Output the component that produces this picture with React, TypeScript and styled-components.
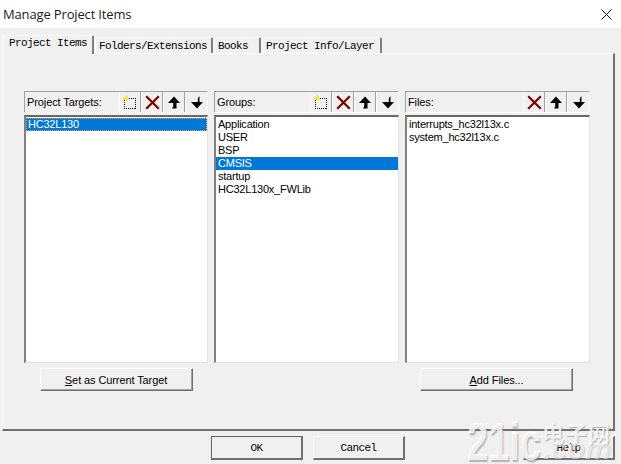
import React from "react";
import styled, { createGlobalStyle } from "styled-components";

const Global = createGlobalStyle`
  html, body { margin: 0; padding: 0; background: #f0f0f0; }
  * { box-sizing: border-box; }
`;

const Win = styled.div`
  position: relative;
  width: 621px;
  height: 464px;
  overflow: hidden;
  display: flex;
  flex-direction: column;
  background: #f0f0f0;
  font-family: "Liberation Sans", Arial, sans-serif;
`;

const TitleBar = styled.div`
  height: 28px;
  flex: none;
  background: #fff;
  display: flex;
  align-items: center;
  justify-content: space-between;
  padding: 0 9px 0 3px;
`;

const Title = styled.div`
  font: 13px "Open Sans", "Noto Sans", sans-serif;
  color: #1a1a1a;
  letter-spacing: -0.15px;
`;

const TabRow = styled.div`
  height: 25px;
  flex: none;
  padding: 7px 0 0 2px;
  display: flex;
  align-items: flex-end;
  gap: 1px;
`;

const Tab = styled.div<{ $active?: boolean; $w: number }>`
  position: relative;
  width: ${(p) => p.$w}px;
  height: ${(p) => (p.$active ? 19 : 16)}px;
  margin-bottom: ${(p) => (p.$active ? -1 : 0)}px;
  z-index: ${(p) => (p.$active ? 2 : 0)};
  background: #f0f0f0;
  border-top: 1px solid #fff;
  border-left: 1px solid #fff;
  border-right: 2px solid #808080;
  border-radius: 2px 2px 0 0;
  font: 11px/15px "Liberation Mono", monospace;
  letter-spacing: -0.6px;
  color: #000;
  white-space: nowrap;
  padding-left: ${(p) => (p.$active ? 6 : 3)}px;
  padding-top: ${(p) => (p.$active ? 0 : 1)}px;
`;

const Panel = styled.div`
  width: 613px;
  height: 378px;
  margin-left: 2px;
  flex: none;
  border-top: 1px solid #fff;
  border-left: 1px solid #fff;
  border-right: 2px solid #707070;
  border-bottom: 2px solid #707070;
  padding: 37px 0 0 21px;
`;

const Columns = styled.div`
  display: grid;
  grid-template-columns: 184px 185px 185px;
  column-gap: 6px;
`;

const Column = styled.div`
  display: flex;
  flex-direction: column;
  align-items: center;
`;

const Header = styled.div`
  width: 100%;
  height: 22px;
  display: flex;
  align-items: center;
  border-top: 1px solid #a0a0a0;
  border-left: 1px solid #a0a0a0;
  border-right: 1px solid #fff;
  border-bottom: 1px solid #fff;
`;

const HeaderLabel = styled.div`
  flex: 1;
  font-size: 11px;
  color: #000;
  padding-left: 2px;
  letter-spacing: -0.1px;
`;

const ToolButton = styled.div`
  width: 22px;
  height: 20px;
  flex: none;
  display: flex;
  align-items: center;
  justify-content: center;
  border-right: 1px solid #a0a0a0;
  border-left: 1px solid #fff;
  &:last-child { border-right: none; }
`;

const List = styled.div`
  width: 100%;
  height: 248px;
  margin-top: 2px;
  background: #fff;
  border-top: 2px solid #696969;
  border-left: 2px solid #808080;
  border-right: 1px solid #e3e3e3;
  border-bottom: 1px solid #e3e3e3;
  padding: 1px 0 0 0;
`;

const Item = styled.div<{ $selected?: boolean; $focus?: boolean }>`
  height: 13px;
  font-size: 11px;
  line-height: 13px;
  letter-spacing: -0.22px;
  padding-left: 2px;
  white-space: nowrap;
  color: ${(p) => (p.$selected ? "#fff" : "#000")};
  background: ${(p) => (p.$selected ? "#0078d7" : "transparent")};
  outline: ${(p) => (p.$focus ? "1px dotted #e8a050" : "none")};
  outline-offset: -1px;
`;

const ActionButton = styled.button<{ $nudge?: boolean }>`
  width: 153px;
  height: 23px;
  margin-top: 5px;
  margin-right: ${(p) => (p.$nudge ? 2 : 0)}px;
  background: #f0f0f0;
  border: none;
  border-top: 1px solid #fff;
  border-left: 1px solid #fff;
  border-right: 1px solid #707070;
  border-bottom: 1px solid #707070;
  box-shadow: inset -1px -1px 0 #a0a0a0;
  font: 11px "Liberation Sans", Arial, sans-serif;
  letter-spacing: -0.1px;
  color: #000;
  padding: 0;
  u { text-underline-offset: 1px; }
`;

const Footer = styled.div`
  flex: 1;
  display: flex;
  align-items: flex-start;
  padding: 5px 6px 0 211px;
  gap: 10px;
`;

const DialogButton = styled.button<{ $default?: boolean; $far?: boolean }>`
  width: 92px;
  height: 24px;
  margin-left: ${(p) => (p.$far ? "auto" : "0")};
  background: #f0f0f0;
  border: 1px solid ${(p) => (p.$default ? "#646464" : "#f8f8f8")};
  border-right-color: #707070;
  border-bottom-color: #707070;
  border-right-width: 2px;
  border-bottom-width: 2px;
  font: 11px "Liberation Mono", monospace;
  letter-spacing: -0.6px;
  color: #000;
  padding: 0;
`;

const Close = styled.svg`
  display: block;
`;

const Watermark = styled.div`
  position: absolute;
  left: 467px;
  top: 417px;
  width: 154px;
  height: 47px;
  pointer-events: none;
  color: rgba(255, 255, 255, 0.8);
  text-shadow: 1px 1px 1px rgba(120, 120, 120, 0.5);
`;

const MarkBig = styled.span`
  position: absolute;
  left: 0;
  top: 11px;
  font: 700 38px/28px "Liberation Sans", Arial, sans-serif;
  transform: scaleY(1.4);
`;

const MarkCn = styled.span`
  position: absolute;
  left: 75px;
  top: 3px;
  font: 700 22px/24px "Noto Sans CJK SC", sans-serif;
  letter-spacing: 1px;
  white-space: nowrap;
`;

const MarkCom = styled.span`
  position: absolute;
  left: 76px;
  top: 18px;
  font: italic 700 29px/28px "Liberation Sans", Arial, sans-serif;
  white-space: nowrap;
  color: rgba(255, 255, 255, 0.45);
  text-shadow: 1px 1px 1px rgba(120, 120, 120, 0.25);
`;

const NewIcon = () => (
  <svg width="15" height="15" viewBox="0 0 15 15" shapeRendering="crispEdges">
    <rect x="1.5" y="3.5" width="11" height="10" fill="none" stroke="#000" strokeDasharray="1 1" />
    <path d="M3 0v6M0 3h6M1 1l4 4M5 1L1 5" stroke="#f5e82a" strokeWidth="1" />
  </svg>
);
const DelIcon = () => (
  <svg width="15" height="15" viewBox="0 0 15 15">
    <path d="M1.2 1.2l12.6 12.6M13.8 1.2L1.2 13.8" stroke="#7b0000" strokeWidth="2.2" />
  </svg>
);
const UpIcon = () => (
  <svg width="12" height="13" viewBox="0 0 12 13">
    <path d="M6 0.5L12 7H8.5V12.5H4L5.2 10.5V7H0z" fill="#000" />
  </svg>
);
const DownIcon = () => (
  <svg width="12" height="13" viewBox="0 0 12 13">
    <path d="M8 0.5L6.8 2.5V6H0L6 12.5L12 6H8.5V0.5z" fill="#000" />
  </svg>
);

const Tools = ({ withNew = true }: { withNew?: boolean }) => (
  <>
    {withNew && <ToolButton><NewIcon /></ToolButton>}
    <ToolButton><DelIcon /></ToolButton>
    <ToolButton><UpIcon /></ToolButton>
    <ToolButton><DownIcon /></ToolButton>
  </>
);

const groups = ["Application", "USER", "BSP", "CMSIS", "startup", "HC32L130x_FWLib"];

export default function App() {
  return (
    <Win>
      <Global />
      <TitleBar>
        <Title>Manage Project Items</Title>
        <Close width="11" height="11" viewBox="0 0 11 11">
          <path d="M0.5 0.5l10 10M10.5 0.5l-10 10" stroke="#111" strokeWidth="1" fill="none" />
        </Close>
      </TitleBar>
      <TabRow>
        <Tab $active $w={92}>Project Items</Tab>
        <Tab $w={118}>Folders/Extensions</Tab>
        <Tab $w={47}>Books</Tab>
        <Tab $w={120}>Project Info/Layer</Tab>
      </TabRow>
      <Panel>
        <Columns>
          <Column>
            <Header>
              <HeaderLabel>Project Targets:</HeaderLabel>
              <Tools />
            </Header>
            <List>
              <Item $selected $focus>HC32L130</Item>
            </List>
            <ActionButton><u>S</u>et as Current Target</ActionButton>
          </Column>
          <Column>
            <Header>
              <HeaderLabel>Groups:</HeaderLabel>
              <Tools />
            </Header>
            <List>
              {groups.map((g) => (
                <Item key={g} $selected={g === "CMSIS"}>{g}</Item>
              ))}
            </List>
          </Column>
          <Column>
            <Header>
              <HeaderLabel>Files:</HeaderLabel>
              <Tools withNew={false} />
            </Header>
            <List>
              <Item>interrupts_hc32l13x.c</Item>
              <Item>system_hc32l13x.c</Item>
            </List>
            <ActionButton $nudge><u>A</u>dd Files...</ActionButton>
          </Column>
        </Columns>
      </Panel>
      <Footer>
        <DialogButton $default>OK</DialogButton>
        <DialogButton>Cancel</DialogButton>
        <DialogButton $far>Help</DialogButton>
      </Footer>
      <Watermark>
        <MarkBig>21ic</MarkBig>
        <MarkCn>电子网</MarkCn>
        <MarkCom>.com</MarkCom>
      </Watermark>
    </Win>
  );
}
